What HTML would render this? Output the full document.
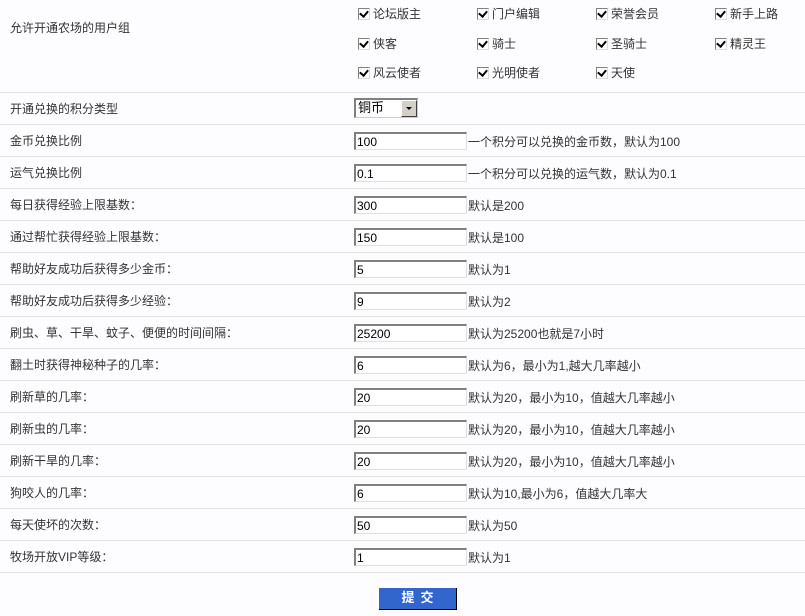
<!DOCTYPE html>
<html><head><meta charset="utf-8"><style>
*{margin:0;padding:0;box-sizing:border-box}
body{width:805px;height:616px;background:#fdfcff;font:12px "Liberation Sans","Noto Sans CJK SC","WenQuanYi Zen Hei",sans-serif;color:#333;position:relative;overflow:hidden}
.line{position:absolute;left:0;width:805px;height:1px;background:#e4e3e8}
.lbl{position:absolute;left:10px}
.in{position:absolute;left:354px;width:113px;height:18px;background:#fff;border-top:2px solid #808080;border-left:2px solid #808080;border-right:1px solid #e0e0e0;border-bottom:1px solid #e0e0e0;font:12px "Liberation Sans","Noto Sans CJK SC",sans-serif;color:#000;padding:1px 1px;line-height:14px}
.tx{position:absolute;left:468px;color:#333}
.cb{position:absolute;font-size:12px}
.cb i{display:inline-block;width:12px;height:12px;border-top:1px solid #808080;border-left:1px solid #808080;border-right:1px solid #ddd;border-bottom:1px solid #ddd;background:#fff;vertical-align:-2px;margin-right:3px;position:relative}
.cb i:after{content:"";position:absolute;left:2px;top:0px;width:4px;height:6px;border-right:2px solid #000;border-bottom:2px solid #000;transform:rotate(40deg)}
.sel{position:absolute;left:354px;top:98px;width:64px;height:20px;background:#fff;border-top:2px solid #808080;border-left:2px solid #808080;border-right:1px solid #ccc;border-bottom:1px solid #ccc;color:#000;padding-left:2px;line-height:16px;font-size:13px}
.sel b{position:absolute;right:0;top:0;width:16px;height:17px;background:#d4d0c8;border:1px solid #fff;border-right-color:#404040;border-bottom-color:#404040}
.sel b:after{content:"";position:absolute;left:4px;top:6px;border-left:3px solid transparent;border-right:3px solid transparent;border-top:3px solid #000}
.btn{position:absolute;left:379px;top:588px;width:78px;height:22px;background:#3366cc;border-right:1px solid #000;border-bottom:1px solid #000;color:#fff;font-weight:bold;text-align:center;line-height:20px;font-size:13px;letter-spacing:6px;padding-left:6px}
</style></head><body>
<div class="lbl" style="top:19px">允许开通农场的用户组</div>
<div class="cb" style="left:358px;top:5px"><i></i>论坛版主</div>
<div class="cb" style="left:477px;top:5px"><i></i>门户编辑</div>
<div class="cb" style="left:596px;top:5px"><i></i>荣誉会员</div>
<div class="cb" style="left:715px;top:5px"><i></i>新手上路</div>
<div class="cb" style="left:358px;top:35px"><i></i>侠客</div>
<div class="cb" style="left:477px;top:35px"><i></i>骑士</div>
<div class="cb" style="left:596px;top:35px"><i></i>圣骑士</div>
<div class="cb" style="left:715px;top:35px"><i></i>精灵王</div>
<div class="cb" style="left:358px;top:64px"><i></i>风云使者</div>
<div class="cb" style="left:477px;top:64px"><i></i>光明使者</div>
<div class="cb" style="left:596px;top:64px"><i></i>天使</div>
<div class="line" style="top:92px"></div>
<div class="lbl" style="top:100px">开通兑换的积分类型</div>
<div class="sel">铜币<b></b></div>
<div class="line" style="top:124px"></div>
<div id="rows"></div>
<script>
var R=[["金币兑换比例","100","一个积分可以兑换的金币数，默认为100"],
["运气兑换比例","0.1","一个积分可以兑换的运气数，默认为0.1"],
["每日获得经验上限基数：","300","默认是200"],
["通过帮忙获得经验上限基数：","150","默认是100"],
["帮助好友成功后获得多少金币：","5","默认为1"],
["帮助好友成功后获得多少经验：","9","默认为2"],
["刷虫、草、干旱、蚊子、便便的时间间隔：","25200","默认为25200也就是7小时"],
["翻土时获得神秘种子的几率：","6","默认为6，最小为1,越大几率越小"],
["刷新草的几率：","20","默认为20，最小为10，值越大几率越小"],
["刷新虫的几率：","20","默认为20，最小为10，值越大几率越小"],
["刷新干旱的几率：","20","默认为20，最小为10，值越大几率越小"],
["狗咬人的几率：","6","默认为10,最小为6，值越大几率大"],
["每天使坏的次数：","50","默认为50"],
["牧场开放VIP等级：","1","默认为1"]];
var h="";
R.forEach(function(r,i){var t=124+i*32;
h+='<div class="lbl" style="top:'+(t+8)+'px">'+r[0]+'</div><div class="in" style="top:'+(t+8)+'px">'+r[1]+'</div><div class="tx" style="top:'+(t+9)+'px">'+r[2]+'</div><div class="line" style="top:'+(t+32)+'px"></div>';});
document.getElementById("rows").outerHTML=h;
</script>
<div class="btn">提交</div>
</body></html>
